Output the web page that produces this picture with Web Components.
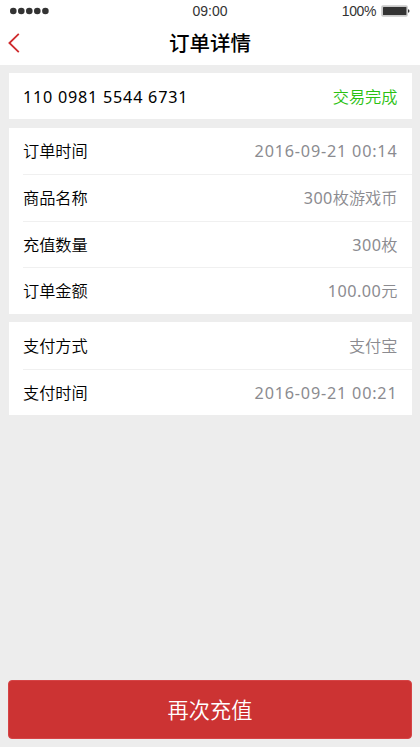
<!DOCTYPE html>
<html lang="zh-CN">
<head>
<meta charset="utf-8">
<title>订单详情</title>
<style>
html,body{margin:0;height:100%}
body{background:#ededed;font-family:"Noto Sans","Noto Sans CJK SC",sans-serif;color:#000}
</style>
</head>
<body>
<order-page></order-page>
<script>
const define = (name, html, setup) => customElements.define(name, class extends HTMLElement {
  constructor() {
    super();
    const t = document.createElement('template');
    t.innerHTML = html;
    this.attachShadow({mode: 'open'}).append(t.content.cloneNode(true));
  }
  connectedCallback() { if (setup) setup(this); }
});

define('status-bar', `<style>
:host{display:grid;grid-template-columns:1fr auto 1fr;align-items:center;height:22px;padding:0 10px;box-sizing:border-box;font:14px/22px "Liberation Sans",sans-serif;color:#333}
svg{display:block}
.power{display:flex;justify-content:flex-end;align-items:center;gap:5px}
.power span{font-size:14px;letter-spacing:-.4px}
</style>
<svg width="40" height="8" viewBox="0 0 40 8" fill="#333"><circle cx="3.3" cy="4" r="3.3"/><circle cx="11.3" cy="4" r="3.3"/><circle cx="19.3" cy="4" r="3.3"/><circle cx="27.3" cy="4" r="3.3"/><circle cx="35.4" cy="4" r="3.3"/></svg>
<span>09:00</span>
<span class="power"><span>100%</span><svg width="29" height="12" viewBox="0 0 29 12"><rect x=".2" y=".2" width="26.6" height="11.6" rx="1.8" fill="#c9c9c9"/><rect x="2" y="2" width="23.4" height="8" rx=".6" fill="#333"/><path d="M27 4.2q1.5 .3 1.5 1.8t-1.5 1.8z" fill="#333"/></svg></span>`);

define('nav-bar', `<style>
:host{display:grid;grid-template-columns:1fr auto 1fr;align-items:center;height:43px;padding:0 8px;box-sizing:border-box}
h1{margin:0;font-size:20.5px;line-height:43px;font-weight:500;color:#000}
svg{display:block;margin-top:-1px}
</style>
<svg width="12" height="20" viewBox="0 0 12 20" fill="none" stroke="#cf2b2d" stroke-width="1.8"><path d="M10.8 .8 1.4 10l9.4 9.2"/></svg>
<h1><slot></slot></h1>`);

define('info-card', `<style>
:host{display:block;background:#fff;margin:0 8.5px}
</style><slot></slot>`);

define('info-row', `<style>
:host{display:flex;justify-content:space-between;align-items:center;height:46.5px;margin-left:14.5px;padding:1px 14px 0 0;box-sizing:border-box;font-size:16.2px;line-height:24px;white-space:nowrap;font-weight:350}
:host([line]){border-top:1px solid #f0f0f0;padding-top:.8px}
:host([done]){height:46px;padding-top:2px}
.value{color:#8b8b90}
:host([done]) .value{color:#2bc112}
</style>
<span><slot name="label"></slot></span><span class="value"><slot></slot></span>`);

define('digit-run', `<style>
:host{display:inline;font-weight:400;letter-spacing:var(--track,.8px)}
</style><slot></slot>`, el => el.style.setProperty('--track', (el.getAttribute('track') || '.8') + 'px'));

define('primary-button', `<style>
:host{display:block;margin:0 8px 8px}
button{display:block;width:100%;height:59px;border:1px solid #d54446;border-radius:4px;background:#cc3333;color:#fff;font:inherit;font-weight:350;font-size:21.2px;line-height:57px;padding:0}
</style><button><slot></slot></button>`);

define('order-page', `<style>
:host{display:flex;flex-direction:column;height:747px;overflow:hidden}
header{background:#fff;height:65px}
main{display:flex;flex-direction:column;gap:8.5px;padding-top:8px;flex:1}
</style>
<header><status-bar></status-bar><nav-bar>订单详情</nav-bar></header>
<main>
<info-card><info-row done><digit-run slot="label" track=".76">110 0981 5544 6731</digit-run>交易完成</info-row></info-card>
<info-card>
<info-row><span slot="label">订单时间</span><digit-run>2016-09-21 00:14</digit-run></info-row>
<info-row line><span slot="label">商品名称</span><digit-run track=".4">300</digit-run>枚游戏币</info-row>
<info-row line><span slot="label">充值数量</span><digit-run track=".4">300</digit-run>枚</info-row>
<info-row line><span slot="label">订单金额</span><digit-run track=".5">100.00</digit-run>元</info-row>
</info-card>
<info-card>
<info-row><span slot="label">支付方式</span>支付宝</info-row>
<info-row line><span slot="label">支付时间</span><digit-run>2016-09-21 00:21</digit-run></info-row>
</info-card>
</main>
<primary-button>再次充值</primary-button>`);
</script>
</body>
</html>
